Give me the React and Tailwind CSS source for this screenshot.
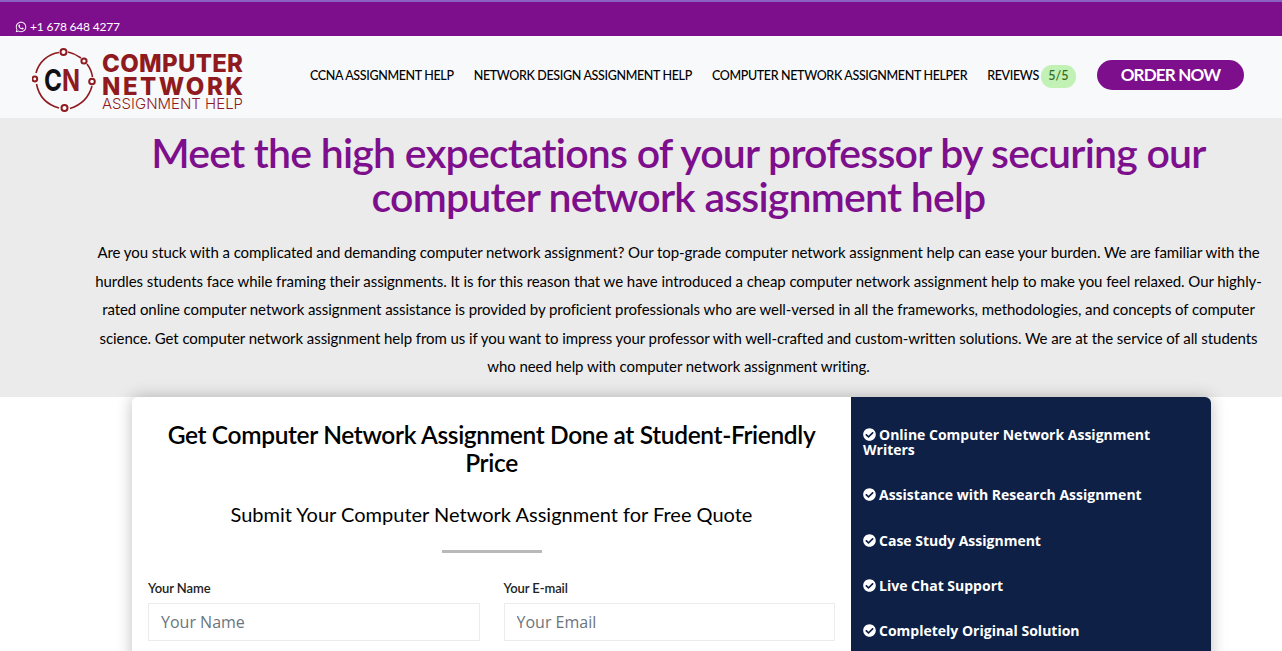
import { FaWhatsapp, FaCheckCircle } from "react-icons/fa";

const navLinks = [
  "CCNA ASSIGNMENT HELP",
  "NETWORK DESIGN ASSIGNMENT HELP",
  "COMPUTER NETWORK ASSIGNMENT HELPER",
];

const features = [
  { text: "Online Computer Network Assignment Writers", className: "mt-[30px]" },
  { text: "Assistance with Research Assignment", className: "mt-[30px]" },
  { text: "Case Study Assignment", className: "mt-[31px]" },
  { text: "Live Chat Support", className: "mt-[30px]" },
  { text: "Completely Original Solution", className: "mt-[30px]" },
];

function LogoMark() {
  return (
    <svg width="64" height="64" viewBox="0 0 64 64" className="shrink-0">
      <g fill="none" stroke="#8f1a20" strokeWidth="1.6">
        <path d="M27 4.5 C16 6 7 14 4 25" />
        <path d="M36 4 C41 5 45 7 49 10" />
        <path d="M55 16 C58 20 60 25 60.5 29" />
        <path d="M60 38 C57 49 49 57 38 60.5" />
        <path d="M27 60 C16 57 7 49 4.5 36" />
        <circle cx="31.5" cy="4" r="3" fill="#fff" strokeWidth="2" />
        <circle cx="52" cy="13" r="2.6" fill="#fff" strokeWidth="2" />
        <circle cx="60" cy="33.5" r="2.8" fill="#fff" strokeWidth="2" />
        <circle cx="32.5" cy="60" r="3" fill="#fff" strokeWidth="2" />
        <circle cx="2.8" cy="31" r="2.4" fill="#fff" strokeWidth="2" />
      </g>
      <text x="12" y="43" fontFamily="Inter" fontSize="30" fontWeight="700" fill="#111" textLength="18" lengthAdjust="spacingAndGlyphs">C</text>
      <text x="30" y="43" fontFamily="Inter" fontSize="30" fontWeight="700" fill="#8f1a20" textLength="18" lengthAdjust="spacingAndGlyphs">N</text>
    </svg>
  );
}

function Logo() {
  return (
    <div className="mt-[9px] flex items-center gap-[6px] font-['Inter',sans-serif] text-[#8f1a20] w-[212px] whitespace-nowrap">
      <LogoMark />
      <div className="flex flex-col items-start pt-[5px]">
        <span className="text-[24px] leading-[22px] font-extrabold tracking-[0.3px]">COMPUTER</span>
        <span className="mt-[1px] text-[24px] leading-[22px] font-extrabold tracking-[2.5px]">NETWORK</span>
        <span className="mt-[-2px] text-[15px] leading-[15px] font-light">ASSIGNMENT HELP</span>
      </div>
    </div>
  );
}

function Header() {
  return (
    <header className="h-[82px] bg-[#f8f9fb] flex items-center pl-[32px] pr-[38px] pb-[4px] font-['Lato',sans-serif]">
      <Logo />
      <nav className="ml-[66px] mt-[2px] flex items-center text-[12.5px] font-medium text-black whitespace-nowrap">
        {navLinks.map((link) => (
          <a key={link} className="mr-[20px] tracking-[-0.35px]">
            {link}
          </a>
        ))}
        <a className="tracking-[-0.35px]">REVIEWS</a>
        <span className="ml-[2px] w-[35px] h-[23px] rounded-[11px] bg-[#c1f1b4] text-[#33691e] flex items-center justify-center">
          5/5
        </span>
      </nav>
      <a className="ml-auto w-[147px] h-[30px] rounded-[15px] bg-[#7d0f8c] text-white text-[17px] font-bold tracking-[-0.8px] flex items-center justify-center">
        ORDER NOW
      </a>
    </header>
  );
}

function Hero() {
  return (
    <section className="h-[279px] bg-[#ebebeb] font-['Lato',sans-serif] pl-[87px] pr-[12px] text-center">
      <h1 className="text-[41px] leading-[44px] font-semibold tracking-[-0.77px] text-[#7d0f8c] pt-[13px] px-[20px]">
        Meet the high expectations of your professor by securing our computer network assignment help
      </h1>
      <p className="mt-[19px] text-[15px] leading-[28.5px] tracking-[-0.07px] text-black">
        Are you stuck with a complicated and demanding computer network assignment? Our top-grade computer network assignment help can ease your burden. We are familiar with the hurdles students face while framing their assignments. It is for this reason that we have introduced a cheap computer network assignment help to make you feel relaxed. Our highly-rated online computer network assignment assistance is provided by proficient professionals who are well-versed in all the frameworks, methodologies, and concepts of computer science. Get computer network assignment help from us if you want to impress your professor with well-crafted and custom-written solutions. We are at the service of all students who need help with computer network assignment writing.
      </p>
    </section>
  );
}

function Field({ label, placeholder }) {
  return (
    <label className="block w-[331.5px]">
      <span className="block text-[13px] leading-[16px] font-semibold text-[#222] tracking-[-0.1px]">{label}</span>
      <input
        placeholder={placeholder}
        className="mt-[7px] w-full h-[38px] border border-[#ececec] px-[12px] text-[16px] font-['Open_Sans',sans-serif] outline-none placeholder:text-[#6c757d]"
      />
    </label>
  );
}

function QuoteCard() {
  return (
    <section className="ml-[132px] w-[1079px] h-[400px] flex rounded-[6px] shadow-[0_0_16px_rgba(0,0,0,0.25)]">
      <div className="w-[719px] bg-white rounded-l-[6px] font-['Lato',sans-serif] text-black text-center">
        <h2 className="pt-[24px] px-[16px] text-[24.5px] leading-[28px] font-semibold tracking-[-0.35px]">
          Get Computer Network Assignment Done at Student-Friendly Price
        </h2>
        <p className="mt-[25px] text-[20px] leading-[24px]">
          Submit Your Computer Network Assignment for Free Quote
        </p>
        <div className="mt-[24px] mx-auto w-[100px] h-[3px] bg-[#b9b9b9]" />
        <div className="mt-[27px] pl-[16px] flex gap-[24px] text-left">
          <Field label="Your Name" placeholder="Your Name" />
          <Field label="Your E-mail" placeholder="Your Email" />
        </div>
      </div>
      <div className="w-[360px] bg-[#0e2045] rounded-r-[6px] pl-[12px] pr-[40px] font-['Open_Sans',sans-serif] text-white text-[14px] leading-[15px] font-bold">
        {features.map((item) => (
          <p key={item.text} className={item.className}>
            <FaCheckCircle className="inline-block w-[13px] h-[13px] mr-[3px] align-[-1px]" />
            {item.text}
          </p>
        ))}
      </div>
    </section>
  );
}

export default function App() {
  return (
    <div className="h-[651px] overflow-hidden bg-white">
      <div className="h-[36px] bg-[#7d0f8c] border-t-2 border-[#8a60c0] flex items-end pb-[1px] pl-[15px] font-['Lato',sans-serif] text-white text-[12px] leading-[16px] tracking-[-0.2px]">
        <FaWhatsapp className="w-[12px] h-[12px] mr-[3px] mb-[2px]" />
        +1 678 648 4277
      </div>
      <Header />
      <Hero />
      <QuoteCard />
    </div>
  );
}
